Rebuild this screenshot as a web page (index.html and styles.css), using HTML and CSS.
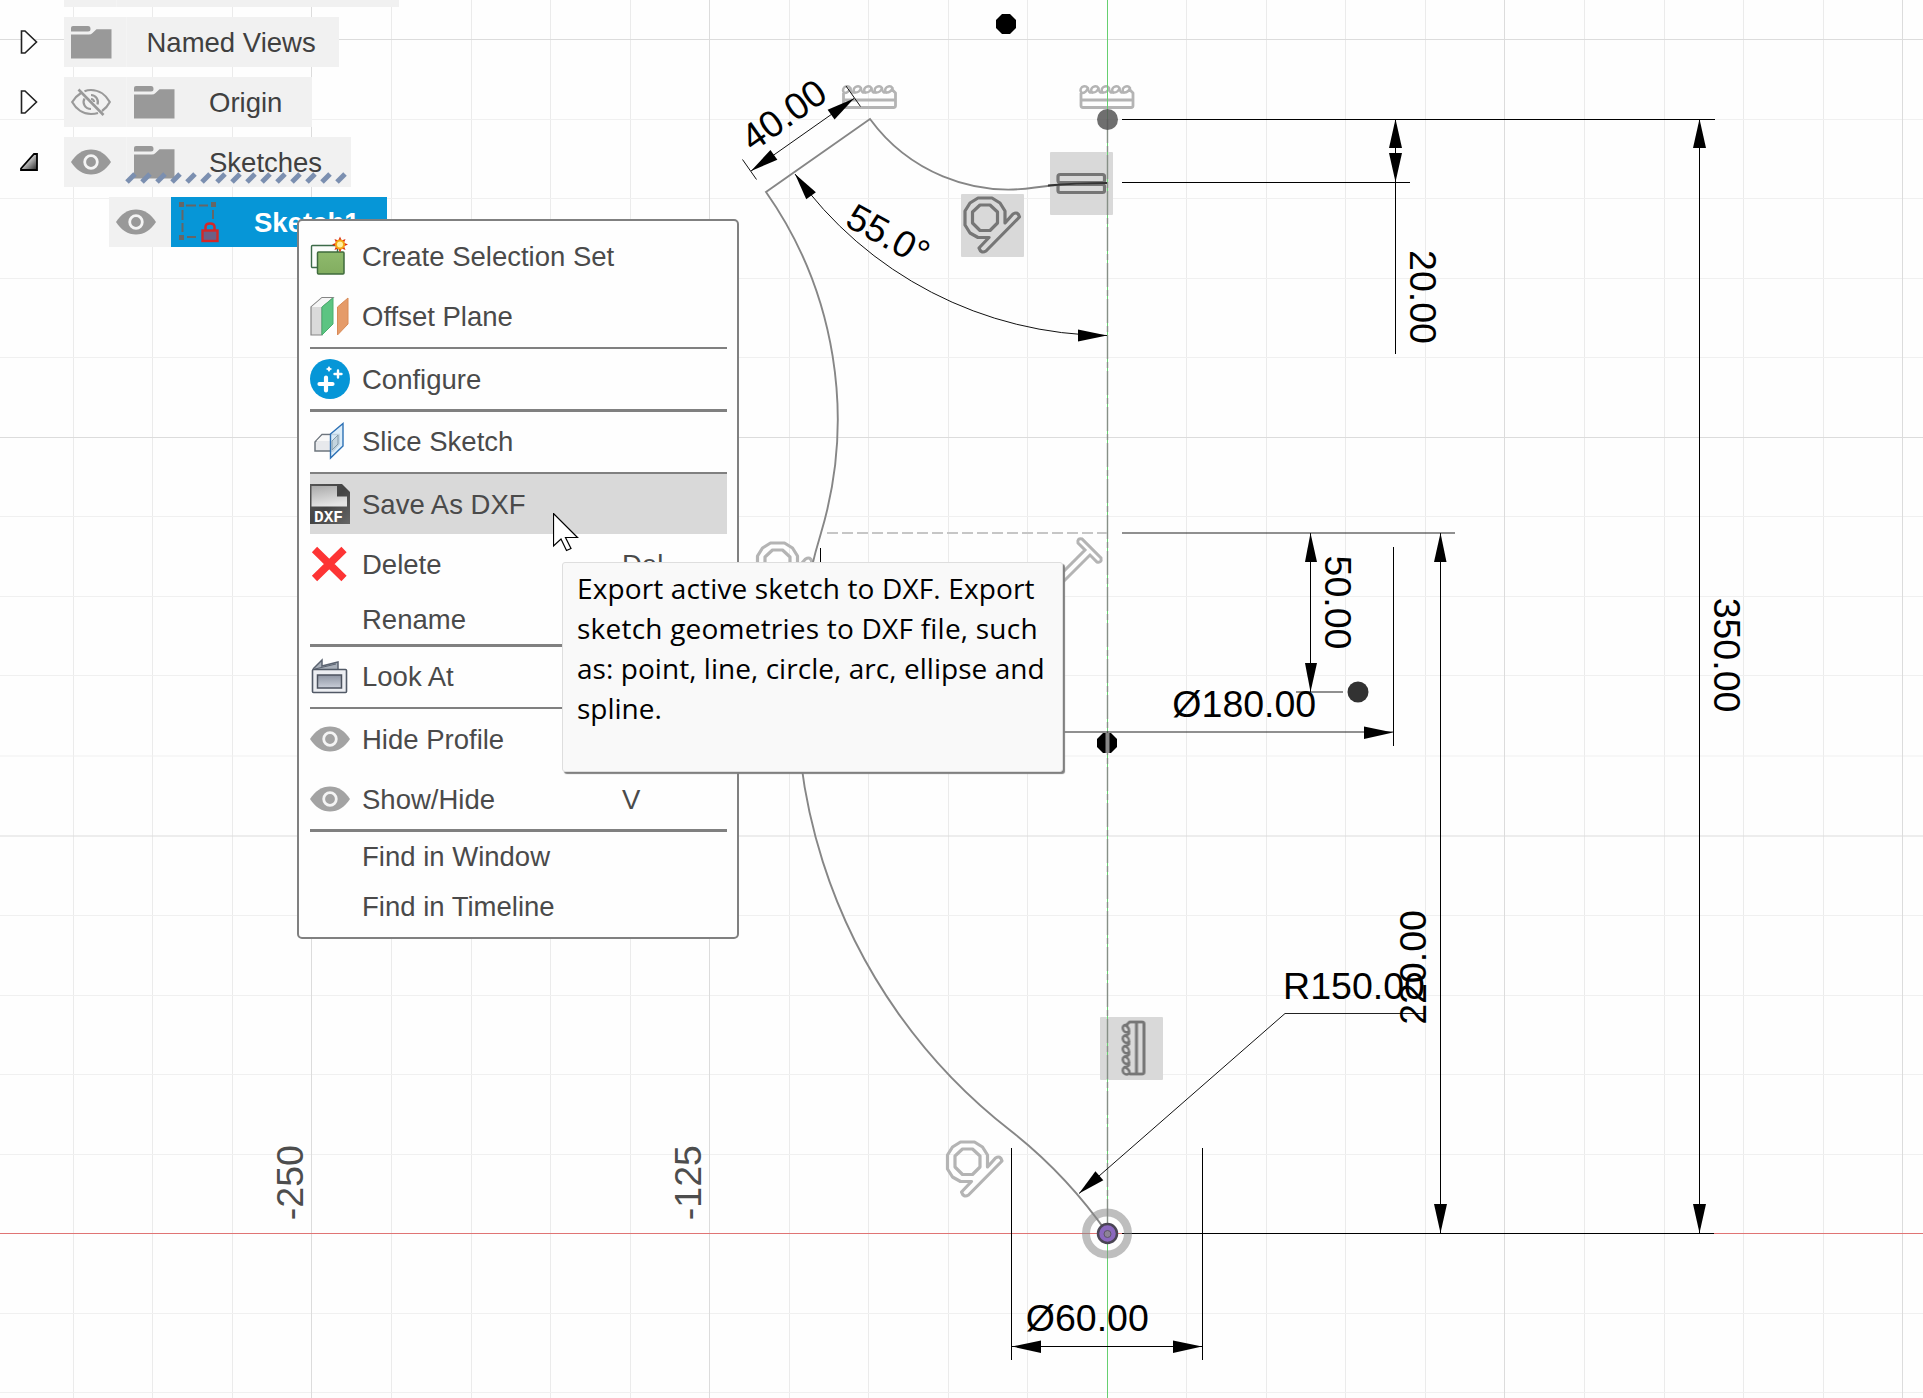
FILE: index.html
```html
<!DOCTYPE html>
<html lang="en">
<head>
<meta charset="utf-8">
<title>Sketch1</title>
<link rel="stylesheet" href="styles.css">
</head>
<body>
<svg class="defs" width="0" height="0" aria-hidden="true">
  <defs>
    <linearGradient id="g-tri" x1="0" y1="0" x2="1" y2="1"><stop offset=".3" stop-color="#eee"/><stop offset="1" stop-color="#222"/></linearGradient>
    <linearGradient id="g-green" x1="0" y1="0" x2="0" y2="1"><stop offset="0" stop-color="#8fba6c"/><stop offset="1" stop-color="#82ad60"/></linearGradient>
    <linearGradient id="g-dxf" x1="0" y1="0" x2="1" y2="1"><stop offset="0" stop-color="#555"/><stop offset=".5" stop-color="#444"/><stop offset="1" stop-color="#666"/></linearGradient>
    <linearGradient id="g-page" x1="0" y1="0" x2="0.3" y2="1"><stop offset="0" stop-color="#aaa"/><stop offset="1" stop-color="#e4e4e4"/></linearGradient>
    <linearGradient id="g-look" x1="0" y1="0" x2="0" y2="1"><stop offset="0" stop-color="#8e95a3"/><stop offset="1" stop-color="#c9ced8"/></linearGradient>
    <filter id="soft" x="-20%" y="-20%" width="140%" height="140%"><feGaussianBlur stdDeviation="0.7"/></filter>
  </defs>
  <symbol id="eye" viewBox="0 0 40 40">
    <path d="M0 20C5 12 12 7.500 20 7.500S35 12 40 20C35 28 28 32.500 20 32.500S5 28 0 20Z" fill="currentColor"/>
    <circle cx="20" cy="20" r="6.300" fill="currentColor" stroke="#f4f4f4" stroke-width="2.800"/>
  </symbol>
  <symbol id="eye-off" viewBox="0 0 40 40">
    <g fill="none" stroke="#999" stroke-width="2.200">
      <path d="M10 11C6 13.500 3 17 1.200 20C5 27 12 32 20 32Q24 32 27 31"/>
      <path d="M13.500 9.300Q16.500 8 20 8C28 8 35 13 38.800 20Q36 25.500 31 29"/>
      <path d="M13.500 16.500C11 21 14 27 20 27M20 13C25 13 28 18 26.500 22.500M20 17Q23 17.200 23 20"/>
      <path d="M7.500 7.500L32.500 33" stroke-width="2.600"/>
    </g>
  </symbol>
  <symbol id="folder" viewBox="0 0 41 33">
    <path d="M0 4V2Q0 0 2 0H17Q19.500 0 19.500 3Q19.500 5.500 17 5.500H0Z" fill="#999"/>
    <path d="M0 8.500H18Q20 8.500 21.500 7L25.500 3.200H40.500V32.500H0Z" fill="#999"/>
  </symbol>
  <symbol id="closed" viewBox="0 0 18 24">
    <path d="M1.500 1H5L16.500 12L5 23H1.500Z" fill="#fff" stroke="#222" stroke-width="1.600"/>
  </symbol>
  <symbol id="tangent" viewBox="0 0 63 63" overflow="visible">
    <g fill="none" stroke="currentColor" stroke-width="3.200" stroke-linejoin="round" filter="url(#soft)">
      <path d="M44 29L52 20Q57 17 58.500 23L25 57Q20 60 18 54L28 43.500H17L9 39L4 31V17L9 9L17 4H31L39 9L44 17Z"/>
      <path d="M19 11H29L36.500 18V29L29 36.500H19L11.500 29V18Z"/>
    </g>
  </symbol>
  <symbol id="ruler" viewBox="0 0 56 26" overflow="visible">
    <g fill="none" stroke="currentColor" stroke-width="2.800" stroke-linejoin="round" filter="url(#soft)">
      <path d="M2 9V21.500Q2 23.500 4 23.500H52Q54 23.500 54 21.500V9L51 6M2 16H54"/>
      <g stroke-width="2.400">
        <path d="M3 9.500Q0 6 3 3Q6.500 1 9 4Q9.500 9.500 13 8.500Q11 5 14 3Q17.500 1 19.500 4Q20 9.500 23.500 8.500Q21.500 5 24.500 3Q28 1 30 4Q30.500 9.500 34 8.500Q32 5 35 3Q38.500 1 40.500 4Q41 9.500 44.500 8.500Q42.500 5 45.500 3Q49 1 51 4V8"/>
        <path d="M3 9Q7 9 9 4M13 8.500Q18 9 19.500 4M23.500 8.500Q28.500 9 30 4M34 8.500Q39 9 40.500 4M44.500 8.500Q49 9 51 4"/>
      </g>
    </g>
  </symbol>
</svg>

<main class="viewport">
  <svg class="canvas" width="1923" height="1398" viewBox="0 0 1923 1398">
    <g class="grid">
      <path class="minor-v" d="M73.500 0V1398M152.500 0V1398M232.500 0V1398M391.500 0V1398M471.500 0V1398M550.500 0V1398M630.500 0V1398M789.500 0V1398M868.500 0V1398M948.500 0V1398M1027.500 0V1398M1186.500 0V1398M1266.500 0V1398M1345.500 0V1398M1425.500 0V1398M1584.500 0V1398M1664.500 0V1398M1743.500 0V1398M1823.500 0V1398"/>
      <path class="minor-h" d="M0 119.500H1923M0 198.500H1923M0 278.500H1923M0 357.500H1923M0 516.500H1923M0 596.500H1923M0 675.500H1923M0 756H1923M0 915.500H1923M0 995.500H1923M0 1074.500H1923M0 1154.500H1923M0 1313.500H1923M0 1392.500H1923"/>
      <path class="major" d="M311.500 0V1398M709.500 0V1398M1504.500 0V1398M1902.500 0V1398M0 39.500H1923M0 437.500H1923M0 836H1923"/>
    </g>

    <!-- constraint badges -->
    <g class="badge">
      <rect x="1050" y="152" width="63" height="63" rx="1"/>
      <rect x="961" y="194" width="63" height="63" rx="1"/>
      <rect x="1100" y="1017" width="63" height="63" rx="1"/>
    </g>
    <g class="glyph">
      <use href="#ruler" x="841.500" y="84" width="56" height="26"/>
      <use href="#ruler" x="1079" y="84" width="56" height="26"/>
      <use href="#tangent" x="943.500" y="1138" width="63" height="63"/>
      <use href="#tangent" x="753.500" y="539" width="63" height="63"/>
      <path d="M1078 543Q1077 538 1082 539L1101 558Q1102 563 1097 562L1090 555L1050 595L1045 590L1085 550Z" fill="none" stroke="currentColor" stroke-width="3" filter="url(#soft)"/>
    </g>
    <g class="glyph dark">
      <use href="#tangent" x="961" y="194" width="63" height="63"/>
      <g fill="none" stroke="currentColor" stroke-width="3.200" filter="url(#soft)">
        <rect x="1058" y="174.500" width="46.500" height="8" rx="2"/>
        <rect x="1058" y="184.500" width="46.500" height="8" rx="2"/>
      </g>
      <use href="#ruler" x="0" y="0" width="56" height="26" transform="translate(1120.500 1076) rotate(-90)"/>
    </g>

    <!-- axes -->
    <path class="axis-x" d="M0 1233.500H1923"/>
    <path class="axis-y" d="M1107.500 0V1398"/>
    <path class="centerline" d="M1107.500 119V1233"/>
    <path class="construction" d="M827 533H1107"/>

    <!-- profile -->
    <path class="profile" d="M1107.500 1233.500A477.500 477.500 0 0 0 1011 1131A552 552 0 0 1 821 533A396 396 0 0 0 766 192L870 119A172 172 0 0 0 1035 187.500Q1068 183 1107 183"/>
    <path class="profile strong" d="M1048 185.500Q1075 183 1107 183"/>

    <!-- dimension lines -->
    <g class="dim">
      <path d="M1122 119.500H1715M1122 182.500H1410M1395.500 120V354M1699.500 120V1233M1440.500 533V1233M1310.500 533V692M1393.500 547V746M820.500 548V746M1122 1233.500H1714M1011.500 1148V1360M1202.500 1148V1360M1012 1346.500H1202"/>
      <path class="faint" d="M1122 533H1455M1296 692H1343M821 732H1393M1285 1013.500H1425"/>
      <path d="M751 171L854 98.500M742.500 159.500L756.500 179.500M846 86L860.500 106.500M795 174A386 386 0 0 0 1107 335.500M1079 1193.500L1285 1013.500" class="thin"/>
    </g>
    <g class="arrows">
      <path d="M1395.500 119L1389 148H1402Z"/>
      <path d="M1395.500 182L1389 153H1402Z"/>
      <path d="M1699.500 119L1693 148H1706Z"/>
      <path d="M1699.500 1233L1693 1204H1706Z"/>
      <path d="M1440.500 533L1434 562H1446.500Z"/>
      <path d="M1440.500 1233L1434 1204H1447Z"/>
      <path d="M1310.500 533L1305 562H1317Z"/>
      <path d="M1310.500 692L1305 663H1317Z"/>
      <path d="M1393 732.500L1364 726.500V739Z"/>
      <path d="M1012 1346.500L1041 1340.500V1353Z"/>
      <path d="M1202 1346.500L1173 1340.500V1353Z"/>
      <path d="M1107 335.500L1078 329.500V341.500Z"/>
      <path d="M0 0L28 -6V6Z" transform="translate(751 171) rotate(-35.100)"/>
      <path d="M0 0L-28 -6V6Z" transform="translate(854 98.500) rotate(-35.100)"/>
      <path d="M0 0L27 -6V6Z" transform="translate(795 174) rotate(53.500)"/>
      <path d="M0 0L27 -6V6Z" transform="translate(1079 1193.500) rotate(-41)"/>
    </g>

    <!-- points -->
    <path class="point" d="M1002 14H1010L1016 20V28L1010 34H1002L996 28V20Z"/>
    <path class="point" d="M1103 733H1111L1117 739V747L1111 753H1103L1097 747V739Z"/>
    <path d="M1107.500 733V753" stroke="#888" stroke-width="4"/>
    <circle cx="1107.500" cy="119.500" r="10.500" fill="#555" fill-opacity=".85" filter="url(#soft)"/>
    <circle cx="1358" cy="692" r="10.500" fill="#333" filter="url(#soft)"/>
    <circle cx="1107" cy="1233.500" r="21" fill="none" stroke="#888" stroke-opacity=".55" stroke-width="8"/>
    <circle cx="1107.500" cy="1233.500" r="9.500" fill="#8b68be" stroke="#4a4554" stroke-width="2.500"/>
    <circle cx="1107.500" cy="1234" r="3.500" fill="#8d8496" stroke="#5d5468"/>

    <!-- dimension values, each centred on its own origin -->
    <g class="value">
      <text transform="translate(783.500 114.500) rotate(-35.100)" y="13.500">40.00</text>
      <text transform="translate(888.500 234.500) rotate(29)" y="13.500">55.0°</text>
      <text transform="translate(1423 297) rotate(90)" y="13.500">20.00</text>
      <text transform="translate(1338 602.500) rotate(90)" y="13.500">50.00</text>
      <text transform="translate(1727 655) rotate(90)" y="13.500">350.00</text>
      <text transform="translate(1412.500 967.500) rotate(-90)" y="13.500">220.00</text>
      <text x="1244.300" y="717">Ø180.00</text>
      <text x="1087.300" y="1331">Ø60.00</text>
      <text x="1354" y="998.500">R150.00</text>
    </g>
    <g class="value ruler-value">
      <text transform="translate(289.500 1182.600) rotate(-90)" y="13">-250</text>
      <text transform="translate(687.500 1182.600) rotate(-90)" y="13">-125</text>
    </g>
  </svg>

  <nav class="tree">
    <div class="node cut"><span class="toggle"></span><span class="cell"></span><span class="label"></span></div>
    <div class="node views"><span class="toggle"><svg width="18" height="24"><use href="#closed"/></svg></span><span class="cell"><svg width="41" height="33"><use href="#folder"/></svg></span><span class="label"><span class="name">Named Views</span></span></div>
    <div class="node origin"><span class="toggle"><svg width="18" height="24"><use href="#closed"/></svg></span><span class="cell"><svg width="40" height="40"><use href="#eye-off"/></svg></span><span class="label"><svg width="41" height="33"><use href="#folder"/></svg><span class="name">Origin</span></span></div>
    <div class="node sketches"><span class="toggle"><svg width="18" height="18" viewBox="0 0 18 18"><path d="M1 15.500L14 1H17V17H1Z" fill="url(#g-tri)" stroke="#000" stroke-width="1.800"/></svg></span><span class="cell"><svg width="40" height="40"><use href="#eye"/></svg></span><span class="label"><svg width="41" height="33"><use href="#folder"/></svg><span class="name">Sketches</span><svg class="hatch" width="226" height="12"><path d="M2 10L10 2M17 10L25 2M32 10L40 2M47 10L55 2M62 10L70 2M77 10L85 2M92 10L100 2M107 10L115 2M122 10L130 2M137 10L145 2M152 10L160 2M167 10L175 2M182 10L190 2M197 10L205 2M212 10L220 2"/></svg></span></div>
    <div class="node sketch"><span class="toggle"></span><span class="cell"><svg width="40" height="40"><use href="#eye"/></svg></span><span class="label"><svg width="42" height="42" viewBox="0 0 42 42"><g fill="#666"><path d="M0 1h5v5H0zM32 1h5v5h-5zM0 34h5v5H0zM7 3.500h10v2H7zM20 3.500h9v2h-9zM2.500 9h2v10h-2zM2.500 22h2v9h-2zM33 9h2v9h-2zM8 35h9v2H8z"/></g><path d="M26.500 29V26Q26.500 22.500 31 22.500T35.500 26V29" fill="none" stroke="#d42828" stroke-width="2.500"/><rect x="23.500" y="29.500" width="15" height="10.500" fill="#6b6088" stroke="#d42828" stroke-width="2.400"/></svg><span class="name">Sketch1</span></span></div>
  </nav>

  <section class="menu">
    <div class="item"><svg class="icon" viewBox="0 0 40 40"><rect x="1.500" y="9.500" width="26" height="22" rx="1" fill="#fbfdfb" stroke="#3d6b49" stroke-width="1.400"/><rect x="7.500" y="16" width="26.500" height="22" rx="1" fill="url(#g-green)" stroke="#3f6b3c" stroke-width="1.500"/><path d="M30 .5L31.700 4.500L35.500 3L34 6.800L38 8.500L34 10.200L35.500 14L31.700 12.500L30 16.500L28.300 12.500L24.500 14L26 10.200L22 8.500L26 6.800L24.500 3L28.300 4.500Z" fill="#dc2f12"/><circle cx="30" cy="8.500" r="4" fill="#fff2a0" stroke="#f5a613" stroke-width="2"/></svg><span class="name">Create Selection Set</span></div>
    <div class="item"><svg class="icon" viewBox="0 0 40 40"><path d="M1 11L12 1.500H23L12 11V39H1Z" fill="#dadada" stroke="#858585" stroke-width="1.200"/><path d="M1.500 11L12 2H22L11.500 11Z" fill="#f6f6f6"/><path d="M12 11L23 2V28L12 39Z" fill="#5cc482" stroke="#49b06f"/><path d="M27.500 11L38 2V28L27.500 39Z" fill="#e59b69" stroke="#d98a56"/></svg><span class="name">Offset Plane</span></div>
    <hr class="sep gap">
    <div class="item"><svg class="icon" viewBox="0 0 40 40"><circle cx="20" cy="20" r="20" fill="#0696d7"/><path d="M16 18.500V31.500M9.500 25H22.500" stroke="#fff" stroke-width="4.200" stroke-linecap="round"/><path d="M28 11.500V18.500M24.500 15H31.500" stroke="#fff" stroke-width="2.400" stroke-linecap="round"/><path d="M19 7L20.300 9L22.300 10L20.300 11L19 13L17.700 11L15.700 10L17.700 9Z" fill="#fff"/></svg><span class="name">Configure</span></div>
    <hr class="sep thick">
    <div class="item"><svg class="icon" viewBox="0 0 40 40"><path d="M5 20L12 12.500H29V22L23 29H5Z" fill="#e7e9ec" stroke="#6e757d" stroke-width="1.500"/><path d="M12 13.500H24L22 19H6.500Z" fill="#f8f8f8"/><path d="M20.500 12L33 1.500V24L20.500 36Z" fill="#d3e9f7" fill-opacity=".8" stroke="#2d71b5" stroke-width="1.400"/><path d="M22 28V19L28 13V22Z" fill="#c3d4df" stroke="#8299a8"/></svg><span class="name high">Slice Sketch</span></div>
    <hr class="sep">
    <div class="item hover"><svg class="icon" viewBox="0 0 40 40"><path d="M0 0H32L40 8V40H0Z" fill="url(#g-dxf)"/><path d="M1.500 2H27V12.500H37V22.500H1.500Z" fill="url(#g-page)"/><text class="dxf" x="4" y="37.500" textLength="29" lengthAdjust="spacingAndGlyphs">DXF</text></svg><span class="name">Save As DXF</span></div>
    <div class="item"><svg class="icon" viewBox="0 0 40 40"><path d="M4.500 5.500L34 34.500M34 5.500L4.500 34.500" stroke="#fd3434" stroke-width="7.500"/></svg><span class="name">Delete</span><kbd>Del</kbd></div>
    <div class="item plain"><span class="name">Rename</span></div>
    <hr class="sep thick">
    <div class="item"><svg class="icon" viewBox="0 0 40 40"><path d="M3 12L12 3V9L28 5V12" fill="#a9b0ba" stroke="#5b6370" stroke-width="1.500"/><path d="M5 12L26 7" stroke="#5b6370"/><rect x="2.500" y="12.500" width="34" height="23" rx="1" fill="#eceef2" stroke="#515966" stroke-width="1.600"/><rect x="7.500" y="18" width="24" height="13" fill="url(#g-look)" stroke="#4c535f" stroke-width="1.500"/></svg><span class="name high">Look At</span></div>
    <hr class="sep">
    <div class="item"><svg class="icon"><use href="#eye"/></svg><span class="name">Hide Profile</span></div>
    <div class="item"><svg class="icon"><use href="#eye"/></svg><span class="name">Show/Hide</span><kbd>V</kbd></div>
    <hr class="sep thick">
    <div class="item plain"><span class="name high">Find in Window</span></div>
    <div class="item plain"><span class="name high">Find in Timeline</span></div>
  </section>

  <aside class="tooltip">
    <div class="l1">Export active sketch to DXF. Export</div>
    <div class="l2">sketch geometries to DXF file, such</div>
    <div class="l3">as: point, line, circle, arc, ellipse and</div>
    <div class="l4">spline.</div>
  </aside>

  <svg class="cursor" width="26" height="40" viewBox="0 0 26 40"><path d="M.5 .5V33L8 26L13.500 37.500L18 35.500L12.500 24.500H24.500Z" fill="#fff" stroke="#000" stroke-width="1.200"/></svg>
</main>
</body>
</html>
```

FILE: styles.css
```css
body {
  margin: 0;
  background: #fff;
  font-family: "Liberation Sans", Arial, sans-serif;
}

.defs {
  position: absolute;
}

.viewport {
  position: relative;
  width: 1923px;
  height: 1398px;
  overflow: hidden;
  background: #fefefe;
}

/* drawing canvas */
.canvas {
  position: absolute;
  top: 0;
  left: 0;
}

.grid path { fill: none; stroke-width: 1; }
.grid .minor-v { stroke: #ebebeb; }
.grid .minor-h { stroke: #f0f0f0; }
.grid .major { stroke: #dcdcdc; }

.badge { fill: #d9d9d9; }
.glyph { color: #b4b4b4; }
.glyph.dark { color: #767676; }

.axis-x { stroke: #e07474; }
.axis-y { stroke: #66d070; }
.centerline { stroke: #869086; stroke-width: 1.4; stroke-dasharray: 24 3 6 3; }
.construction { stroke: #c6c6c6; stroke-width: 2; stroke-dasharray: 11 4; }

.profile { fill: none; stroke: #868686; stroke-width: 1.9; }
.profile.strong { stroke: #333; }

.dim path { fill: none; stroke: #000; stroke-width: 1; }
.dim .faint { stroke: #222; }
.dim .thin { stroke: #111; }
.arrows, .point { fill: #000; }

.value {
  font-size: 37.5px;
  text-anchor: middle;
  fill: #000;
}
.ruler-value { fill: #4d4d4d; }

/* browser tree */
.tree {
  position: relative;
  display: flex;
  flex-direction: column;
  gap: 10px;
  color: #404040;
  font-size: 27.5px;
}

.node {
  display: flex;
  height: 50px;
}

.name { padding-top: 1px; }
.name.high { padding-top: 0; }

.toggle {
  box-sizing: border-box;
  width: 64px;
  padding-left: 20px;
  display: flex;
  align-items: center;
}

.cell {
  box-sizing: border-box;
  width: 62px;
  padding-left: 7px;
  display: flex;
  align-items: center;
  background: #f1f1f1;
  color: #999;
}

.label {
  position: relative;
  box-sizing: border-box;
  padding-left: 7px;
  display: flex;
  align-items: center;
  gap: 34px;
  background: #f1f1f1;
  border-left: 1px solid #f4f4f4;
  white-space: nowrap;
}

.cut { height: 7px; }
.cut .cell { width: 52px; }
.cut .label { width: 283px; }
.views .label { width: 213px; padding-left: 19.5px; }
.origin .label { width: 186px; }
.sketches .label { width: 225px; }
.sketch .toggle { width: 109px; }
.sketch .label {
  width: 216px;
  background: #0696d7;
  border-color: #0696d7;
  color: #fff;
  font-weight: bold;
  padding-left: 7px;
  gap: 33px;
}

.hatch {
  position: absolute;
  left: -2px;
  bottom: 3px;
  stroke: #7b8fb0;
  stroke-width: 5;
}

/* context menu */
.menu {
  position: absolute;
  left: 297px;
  top: 219px;
  box-sizing: border-box;
  width: 442px;
  height: 720px;
  padding: 5px 10px 0 11px;
  border: 2px solid #808080;
  border-radius: 5px;
  background: #fefefe;
  color: #4a4a4a;
  font-size: 27.5px;
}

.item {
  position: relative;
  display: flex;
  align-items: center;
  gap: 12px;
  height: 60px;
}

.item.plain {
  height: 50px;
  padding-left: 52px;
}

.item.hover { background: #d9d9d9; }

.icon {
  width: 40px;
  height: 40px;
  color: #a3a3a3;
}

.dxf {
  font: bold 17px "Liberation Mono", "Courier New", monospace;
  fill: #fff;
}

kbd {
  position: absolute;
  left: 312px;
  padding-top: 1px;
  font: inherit;
}

.sep {
  height: 2px;
  margin: 0;
  border: 0;
  background: #808080;
}
.sep.gap { margin-top: 1px; }
.sep.thick { height: 3px; }

/* hover tip */
.tooltip {
  position: absolute;
  left: 562px;
  top: 562px;
  box-sizing: border-box;
  width: 501px;
  height: 210px;
  padding: 5px 0 0 14px;
  border: 1px solid #dedede;
  border-radius: 3px;
  background: #f9f9f9;
  box-shadow: 2px 2px 1px #808080;
  font: 28px/40px "Open Sans", "Noto Sans", sans-serif;
  color: #000;
  white-space: nowrap;
}

.l1 { letter-spacing: 0.14px; }
.l2 { letter-spacing: 0.22px; }
.l3 { letter-spacing: 0.05px; }

.cursor {
  position: absolute;
  left: 553px;
  top: 513px;
}
```
